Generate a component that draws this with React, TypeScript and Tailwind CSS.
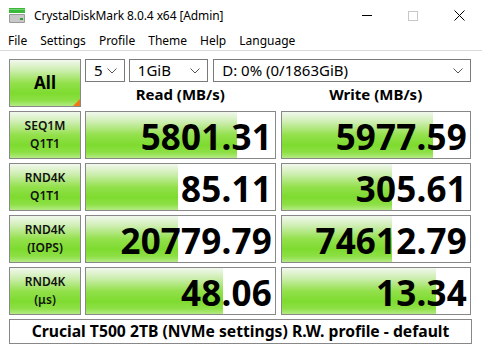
import React from "react";

const seg = { fontFamily: '"Noto Sans", "Open Sans", sans-serif' };

const green =
  "linear-gradient(to bottom, #f2f8ee 0%, #cdeeb0 22%, #93e04c 50%, #7edb2e 72%, #8ee046 88%, #b4ea84 100%)";

function Chevron() {
  return (
    <svg width="10" height="6" viewBox="0 0 10 6" className="shrink-0">
      <path d="M0.5 0.5 L5 5 L9.5 0.5" fill="none" stroke="#555" strokeWidth="1" />
    </svg>
  );
}

function Combo({ text, w }: { text: string; w: string }) {
  return (
    <div className={`${w} h-[23px] border border-[#7a7a7a] bg-white flex items-center justify-between pl-[8px] pr-[7px]`}>
      <span className="text-[15px] leading-none text-black" style={seg}>{text}</span>
      <Chevron />
    </div>
  );
}

function Label({ a, b }: { a: string; b: string }) {
  return (
    <div
      className="h-[48px] border border-[#888] flex flex-col items-center justify-center gap-[4px] text-[12px] leading-[14px] font-semibold text-[#111]"
      style={{ ...seg, background: green }}
    >
      <span>{a}</span>
      <span>{b}</span>
    </div>
  );
}

function Bar({ v, f }: { v: string; f: number }) {
  return (
    <div className="relative h-[48px] border border-[#888] bg-white overflow-hidden flex items-center justify-end pr-[3px]">
      <div className="absolute left-0 top-0 bottom-0" style={{ width: `${f}px`, background: green }} />
      <span className="relative text-[35px] font-bold leading-none text-black tracking-[0.2px] mt-[2px]" style={seg}>
        {v}
      </span>
    </div>
  );
}

export default function App() {
  const rows = [
    { a: "SEQ1M", b: "Q1T1", r: "5801.31", rf: 151, w: "5977.59", wf: 151 },
    { a: "RND4K", b: "Q1T1", r: "85.11", rf: 92, w: "305.61", wf: 110 },
    { a: "RND4K", b: "(IOPS)", r: "20779.79", rf: 92, w: "74612.79", wf: 110 },
    { a: "RND4K", b: "(μs)", r: "48.06", rf: 137, w: "13.34", wf: 154 },
  ];
  return (
    <div className="w-[482px] h-[352px] bg-white overflow-hidden flex flex-col" style={seg}>
      {/* Title bar */}
      <div className="h-[31px] flex items-center">
        <svg width="17" height="15" viewBox="0 0 17 15" className="ml-[9px] mr-[8px]">
          <rect x="0" y="0" width="16" height="5" fill="#3cb83c" />
          <rect x="0" y="1" width="16" height="1" fill="#6fd66f" />
          <rect x="0" y="6" width="16" height="9" rx="1" fill="#9a9a9a" />
          <rect x="1" y="7" width="14" height="7" fill="#c8c8c8" />
          <rect x="11" y="10" width="3" height="2" fill="#2e9e2e" />
        </svg>
        <span className="text-[12px] text-black tracking-[-0.1px]">CrystalDiskMark 8.0.4 x64 [Admin]</span>
        <div className="flex-1" />
        <div className="w-[46px] flex justify-center">
          <div className="w-[10px] h-px bg-black" />
        </div>
        <div className="w-[46px] flex justify-center">
          <div className="w-[10px] h-[10px] border border-[#c8c8c8]" />
        </div>
        <div className="w-[46px] flex justify-center">
          <svg width="11" height="11" viewBox="0 0 11 11">
            <path d="M0.5 0.5 L10.5 10.5 M10.5 0.5 L0.5 10.5" stroke="#000" strokeWidth="1" />
          </svg>
        </div>
      </div>
      {/* Menu */}
      <div className="h-[19px] flex items-center text-[12px] text-black">
        <span className="ml-[8px]">File</span>
        <span className="ml-[13px]">Settings</span>
        <span className="ml-[13px]">Profile</span>
        <span className="ml-[13px]">Theme</span>
        <span className="ml-[13px]">Help</span>
        <span className="ml-[13px]">Language</span>
      </div>
      <div className="h-px bg-[#dadada]" />
      <div className="h-[8px]" />
      {/* Main grid */}
      <div className="pl-[9px] grid grid-cols-[72px_191px_191px] gap-x-[4px] gap-y-[4px]">
        <div
          className="relative h-[48px] border border-[#888] flex items-center justify-center text-[17px] font-bold text-black"
          style={{ background: green }}
        >
          All
          <div className="absolute right-0 bottom-0 w-0 h-0 border-l-[7px] border-l-transparent border-b-[7px] border-b-[#f07814]" />
        </div>
        <div className="col-span-2 flex flex-col">
          <div className="flex gap-[4px]">
            <Combo text="5" w="w-[40px]" />
            <Combo text="1GiB" w="w-[80px]" />
            <Combo text="D: 0% (0/1863GiB)" w="w-[260px] ml-[1px]" />
          </div>
          <div className="flex mt-[5px] text-[15px] font-bold text-black leading-none">
            <div className="w-[191px] text-center">Read (MB/s)</div>
            <div className="w-[191px] ml-[5px] text-center">Write (MB/s)</div>
          </div>
        </div>
        {rows.map((r, i) => (
          <React.Fragment key={i}>
            <Label a={r.a} b={r.b} />
            <Bar v={r.r} f={r.rf} />
            <div className="ml-[1px]">
              <Bar v={r.w} f={r.wf} />
            </div>
          </React.Fragment>
        ))}
        <div className="col-span-3 h-[25px] mr-[-1px] border border-[#888] flex items-center justify-center text-[15.7px] font-bold text-black">
          Crucial T500 2TB (NVMe settings) R.W. profile - default
        </div>
      </div>
    </div>
  );
}
